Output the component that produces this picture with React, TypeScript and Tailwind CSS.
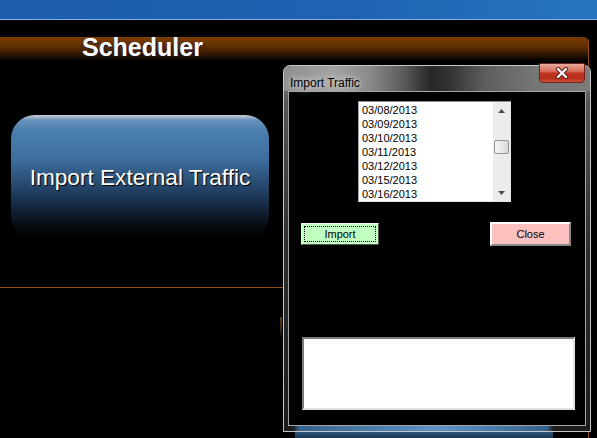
import React from 'react';

const DATES = ['03/08/2013', '03/09/2013', '03/10/2013', '03/11/2013', '03/12/2013', '03/15/2013', '03/16/2013'];

function Arrow({ down }: { down?: boolean }) {
  return (
    <svg width="7" height="4" viewBox="0 0 7 4" className="block">
      <path d={down ? 'M0 0 L7 0 L3.5 4 Z' : 'M0 4 L7 4 L3.5 0 Z'} fill="#4a4a4a" />
    </svg>
  );
}

function ListBox() {
  return (
    <div className="ml-[69px] mt-[9px] flex h-[101px] w-[153px] border border-t-[#8e8e8e] border-l-[#a4a4a4] border-r-[#e3e3e3] border-b-[#e3e3e3] bg-white">
      <ul className="flex-1 pl-[3px] pt-[1px] text-[11px] leading-[14px] text-black">
        {DATES.map((d) => (
          <li key={d}>{d}</li>
        ))}
      </ul>
      <div className="flex w-[17px] flex-col items-center bg-[#ececec]">
        <div className="flex h-[17px] items-center justify-center">
          <Arrow />
        </div>
        <div className="mt-[21px] h-[14px] w-[15px] rounded-[2px] border border-[#959595] bg-gradient-to-r from-[#f6f6f6] to-[#d9d9d9]" />
        <div className="flex-1" />
        <div className="flex h-[17px] items-center justify-center">
          <Arrow down />
        </div>
      </div>
    </div>
  );
}

function ImportDialog() {
  return (
    <div className="absolute left-[283px] top-[65px] flex h-[367px] w-[308px] flex-col rounded-t-[7px] border border-[#c6c6c6] bg-[linear-gradient(to_bottom,#8a8a8a,#555_10%,#2e2e2e_50%,#1c1c1c)]">
      <div className="relative h-[25px] rounded-t-[6px] bg-[linear-gradient(to_right,#8e8e8e_0%,#a2a2a2_16%,#8a8a8a_28%,#565656_40%,#262626_48%,#333_54%,#5e5e5e_66%,#767676_82%,#7c7c7c_100%)] pl-[6px] pt-[4px]">
        <span className="text-[12px] leading-[15px] text-black [text-shadow:0_0_6px_#e8e8e8,0_0_10px_#d0d0d0]">Import Traffic</span>
        <div className="absolute right-[5px] top-[-3px] flex h-[20px] w-[46px] items-center justify-center rounded-b-[4px] border border-[#6e241a] bg-[linear-gradient(to_bottom,#e8a89a_0%,#d8705c_40%,#c0341f_52%,#b52f1c_80%,#cf563c_100%)]">
          <svg width="14" height="12" viewBox="0 0 14 12">
            <path d="M3 2 L11 10 M11 2 L3 10" stroke="#5a1a12" strokeWidth="4.2" strokeLinecap="round" />
            <path d="M3 2 L11 10 M11 2 L3 10" stroke="#ffffff" strokeWidth="2.4" strokeLinecap="round" />
          </svg>
        </div>
      </div>
      <div className="mx-[4px] h-[335px] border border-[#a5a5a5] bg-black">
        <ListBox />
        <div className="mt-[20px] flex h-[24px] items-center justify-between pl-[12px] pr-[14px]">
          <button className="h-[22px] w-[78px] border border-t-[#f4f4f4] border-l-[#f4f4f4] border-r-[#555] border-b-[#555] bg-[#c0ffc0] text-[11px] text-black outline outline-1 outline-offset-[-4px] outline-dotted outline-black">
            Import
          </button>
          <button className="h-[24px] w-[81px] border-2 border-t-white border-l-white border-r-[#8a8a8a] border-b-[#8a8a8a] bg-[#ffc0c0] text-[11px] text-black">
            Close
          </button>
        </div>
        <div className="ml-[13px] mt-[91px] h-[73px] w-[273px] border-2 border-t-[#7c7c7c] border-l-[#7c7c7c] border-r-[#e2e2e2] border-b-[#e2e2e2] bg-white" />
      </div>
      <div className="h-[5px] bg-[linear-gradient(to_right,transparent_3%,#35638f_5%,#5f93c4_50%,#35638f_86%,transparent_88%)]" />
    </div>
  );
}

export default function App() {
  return (
    <div className="relative h-[438px] w-[597px] overflow-hidden bg-black font-['Liberation_Sans',Arial,sans-serif]">
      <div className="h-[19px] bg-[linear-gradient(to_right,#1b5dab,#1e63b1_60%,#2874be)]" />
      <div className="h-px bg-[#86b3e3]" />
      <div className="mt-[17px] h-[401px] w-[589px] rounded-tr-[5px] border-r border-[#8a4a12]">
        <div className="h-[23px] rounded-tr-[5px] bg-[linear-gradient(to_bottom,#7c3e02,#5a2c02_45%,#0a0500)]">
          <h1 className="pl-[82px] text-[25px] font-bold leading-[20px] text-white [text-shadow:1px_1px_1px_#101830]">Scheduler</h1>
        </div>
        <button className="ml-[11px] mt-[55px] flex h-[125px] w-[258px] items-center justify-center rounded-[24px] bg-[linear-gradient(to_bottom,#c8ccd0_0%,#6b95bd_4%,#4a7fb0_12%,#3d6f9f_35%,#1d3858_65%,#070b12_88%,#000_100%)] text-[22.6px] text-white [text-shadow:1px_1px_1px_#000]">
          Import External Traffic
        </button>
        <div className="mt-[47px] h-px bg-[#8e4e16]" />
        <div className="ml-[280px] mt-[29px] h-[18px] w-[2px] bg-gradient-to-b from-[#6a3a10] to-[#2a1606]" />
        <div className="ml-[295px] mt-[97px] h-[6px] w-[258px] bg-gradient-to-b from-[#2d5680] to-[#1a3550]" />
      </div>
      <ImportDialog />
    </div>
  );
}
